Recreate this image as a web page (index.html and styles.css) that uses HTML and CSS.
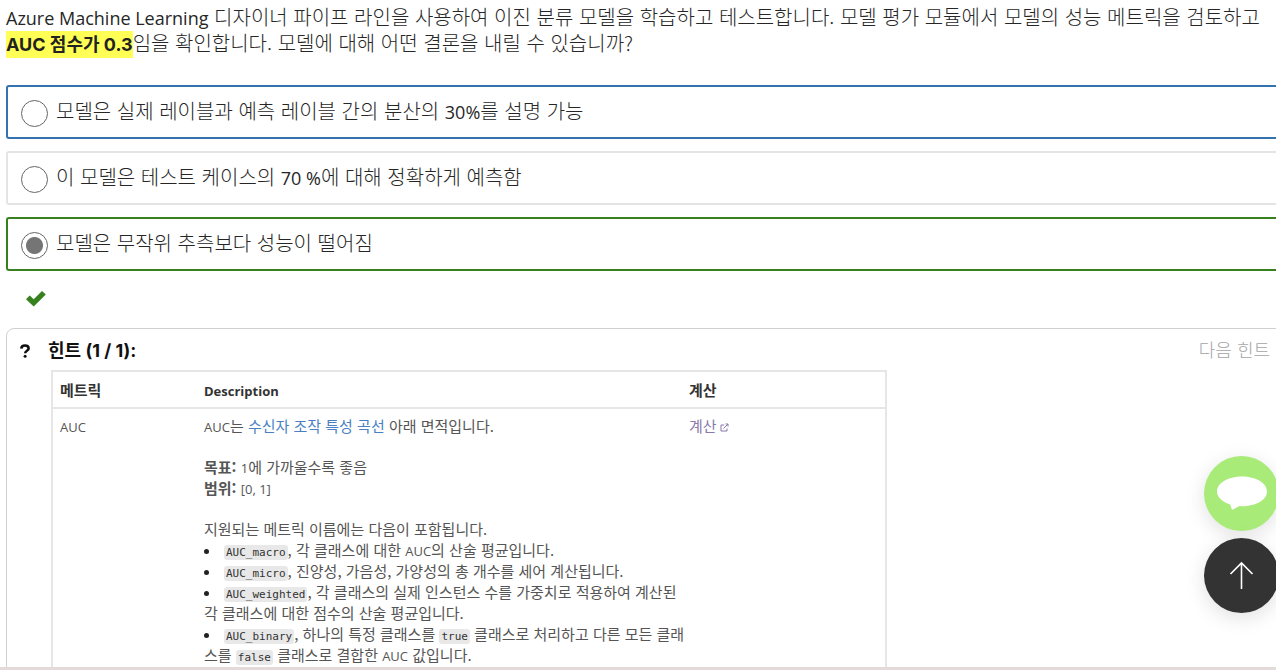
FILE: index.html
```html
<!DOCTYPE html>
<html lang="ko">
<head>
<meta charset="utf-8">
<title>Azure Machine Learning</title>
<link rel="stylesheet" href="styles.css">
</head>
<body>
<main class="page">
  <form class="problem">
    <fieldset class="choices">
      <legend class="question"><span class="latin">Azure Machine Learning</span> 디자이너 파이프 라인을 사용하여 이진 분류 모델을 학습하고 테스트합니다. 모델 평가 모듈에서 모델의 성능 메트릭을 검토하고 <mark class="highlight">AUC 점수가 0.3</mark>임을 확인합니다. 모델에 대해 어떤 결론을 내릴 수 있습니까?</legend>
      <label class="choice choice-focus"><input class="radio" type="radio" name="answer"><span>모델은 실제 레이블과 예측 레이블 간의 분산의 <span class="latin">30%</span>를 설명 가능</span></label>
      <label class="choice"><input class="radio" type="radio" name="answer"><span>이 모델은 테스트 케이스의 <span class="latin">70 %</span>에 대해 정확하게 예측함</span></label>
      <label class="choice choice-correct"><input class="radio" type="radio" name="answer" checked><span>모델은 무작위 추측보다 성능이 떨어짐</span></label>
    </fieldset>
    <div class="status">
      <svg class="check" viewBox="0 0 22 18" role="img" aria-label="정답"><path d="M1 9.200 4.700 5.500 8.700 9.300 17 1 20.800 4.600 8.700 16.500Z"/></svg>
    </div>
  </form>

  <section class="hint">
    <header class="hint-head">
      <svg class="question-mark" viewBox="0 0 10 14" aria-hidden="true"><path d="M1.300 4.600C1.400 2.600 2.800 1.500 5 1.500s3.600 1.100 3.600 2.900c0 2.500-3.400 2.200-3.400 4.900"/><circle cx="5.100" cy="12.200" r="1.500"/></svg>
      <h2 class="hint-title">힌트 (1 / 1):</h2>
      <button class="next" type="button" disabled>다음 힌트</button>
    </header>
    <table class="metrics">
      <colgroup><col class="col-name"><col class="col-text"><col></colgroup>
      <thead>
        <tr><th scope="col">메트릭</th><th scope="col"><span class="small-latin">Description</span></th><th scope="col">계산</th></tr>
      </thead>
      <tbody>
        <tr>
          <td><span class="small-latin">AUC</span></td>
          <td>
            <p class="para"><span class="small-latin">AUC</span>는 <a class="link" href="#roc">수신자 조작 특성 곡선</a> 아래 면적입니다.</p>
            <p class="para"><b>목표:</b> <span class="small-latin">1</span>에 가까울수록 좋음<br><b>범위:</b> <span class="small-latin">[0, 1]</span></p>
            <p class="names">지원되는 메트릭 이름에는 다음이 포함됩니다.</p>
            <ul class="list">
              <li><code>AUC_macro</code>, 각 클래스에 대한 <span class="small-latin">AUC</span>의 산술 평균입니다.</li>
              <li><code>AUC_micro</code>, 진양성, 가음성, 가양성의 총 개수를 세어 계산됩니다.</li>
              <li><code>AUC_weighted</code>, 각 클래스의 실제 인스턴스 수를 가중치로 적용하여 계산된<br>각 클래스에 대한 점수의 산술 평균입니다.</li>
              <li><code>AUC_binary</code>, 하나의 특정 클래스를 <code>true</code> 클래스로 처리하고 다른 모든 클래<br>스를 <code>false</code> 클래스로 결합한 <span class="small-latin">AUC</span> 값입니다.</li>
            </ul>
          </td>
          <td><a class="link visited" href="#calc">계산<svg class="external" viewBox="0 0 9 9" aria-hidden="true"><path d="M4 2H1v6h6V5.500M3.500 5.500 8 1M5.500 1H8v2.500"/></svg></a></td>
        </tr>
      </tbody>
    </table>
  </section>
</main>
<nav class="floating">
  <button class="round chat" type="button" aria-label="채팅"><svg viewBox="0 0 75 75" aria-hidden="true"><path d="M38 20.500c14 0 25 6.600 25 15s-11 14.700-25 14.700l-2.500-.1L28 54l-1.800-5.500C18.500 46 13 41.400 13 35.500c0-8.400 11-15 25-15Z"/></svg></button>
  <button class="round top" type="button" aria-label="맨 위로"><svg viewBox="0 0 75 75" aria-hidden="true"><path d="M37.500 51V25M26.500 36l11-11 11 11"/></svg></button>
</nav>
</body>
</html>
```
FILE: styles.css
```css
* { box-sizing: border-box; }

body {
  margin: 0;
  background: #fff;
  color: #262626;
  font: 300 20px/26px "Noto Sans CJK KR", sans-serif;
}

.page {
  display: flex;
  flex-direction: column;
  height: 100vh;
  padding: 4px 0 0 6px;
  overflow: hidden;
  border-bottom: 3px solid #e4dada;
}

.latin { font: 400 18px/20px "Open Sans", sans-serif; }

.problem, .choices { margin: 0; padding: 0; border: 0; min-width: 0; }

.question { padding: 0 4px 29px 0; }

.highlight {
  padding: 3px 0;
  background: #ffff55;
  color: #222;
  font: 700 18px/20px Inter, "Noto Sans CJK KR", sans-serif;
}

.choices { display: flex; flex-direction: column; }

.choice {
  display: flex;
  align-items: center;
  gap: 8px;
  height: 54px;
  margin: 0 -4px 12px 0;
  padding: 0 13px 2px;
  border: 2px solid #e4e4e4;
  border-radius: 3px;
}
.choice-focus { border-color: #3572b0; }
.choice-correct { border-color: #36801e; }

.radio {
  appearance: none;
  flex: none;
  width: 27px;
  height: 27px;
  margin: 5px 0 0;
  border: 1px solid #666;
  border-radius: 50%;
}
.radio:checked { background: radial-gradient(circle, #757575 8px, transparent 9px); }

.status { padding: 7px 0 0 19px; height: 45px; }
.check { display: block; width: 22px; height: 18px; fill: #36801e; }

.hint {
  flex: 1 0 auto;
  margin-right: -10px;
  padding: 8px 15px 0 13px;
  border: 1px solid #d0d0d0;
  border-radius: 8px;
}

.hint-head { display: flex; align-items: center; height: 28px; }
.question-mark { width: 10px; height: 14px; margin-right: 18px; stroke: #111; stroke-width: 2.6; fill: none; }
.question-mark circle { fill: #111; stroke: none; }
.hint-title { margin: 0; color: #111; font: 700 18px/26px Inter, "Noto Sans CJK KR", sans-serif; }
.next { margin-left: auto; padding: 0 0 4px; border: 0; background: none; color: #a4a4a4; font: 300 18px/24px "Noto Sans CJK KR", sans-serif; }

.metrics {
  width: 836px;
  margin: 5px 0 0 31px;
  table-layout: fixed;
  border-collapse: collapse;
  border: 2px solid #e6e6e6;
  color: #555;
  font: 400 15px/21px "Noto Sans CJK KR", sans-serif;
}
.col-name { width: 145px; }
.col-text { width: 485px; }
.metrics th { padding: 7px; border-bottom: 2px solid #e6e6e6; color: #333; font-weight: 700; text-align: left; }
.metrics td { padding: 6px 7px; vertical-align: top; white-space: nowrap; }
.small-latin { font-family: "Open Sans", sans-serif; font-size: 13px; line-height: 14px; }
.para { margin: 0 0 20px; }
.names { margin: 0; }
.list { margin: 0; padding: 0; list-style: none; }
.list li::before {
  content: "";
  display: inline-block;
  width: 5px;
  height: 5px;
  margin-right: 15px;
  border-radius: 50%;
  background: #222;
  vertical-align: middle;
}
code {
  padding: 1px 2px;
  border-radius: 3px;
  background: #e8e8e8;
  color: #333;
  font: 400 11px/13px "DejaVu Sans Mono", monospace;
}
.link { color: #4a7fc4; text-decoration: none; }
.visited { color: #8878ac; }
.external { width: 9px; height: 9px; margin-left: 3px; fill: none; stroke: currentColor; }

.floating { position: fixed; right: -3px; bottom: 57px; display: grid; gap: 7px; }
.round { width: 75px; height: 75px; padding: 0; border: 0; border-radius: 50%; box-shadow: 0 5px 20px rgba(0, 0, 0, 0.12); }
.round svg { display: block; width: 75px; height: 75px; }
.chat { background: #a8eb78; }
.chat path { fill: #fff; }
.top { background: #333; }
.top path { fill: none; stroke: #fff; stroke-width: 1.6; }
```
